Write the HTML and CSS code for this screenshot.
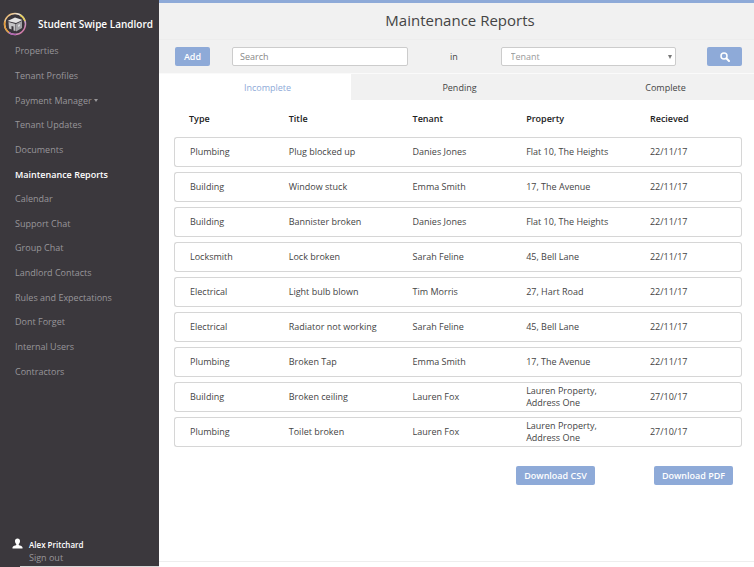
FILE: index.html
```html
<!DOCTYPE html>
<html lang="en">
<head>
  <meta charset="UTF-8">
  <meta name="viewport" content="width=device-width, initial-scale=1.0">
  <title>Maintenance Reports</title>
  <link rel="stylesheet" href="styles.css">
</head>
<body>

  <div class="page">

    <!-- Sidebar -->
    <aside class="sidebar">
      <a class="brand" href="#">
        <svg class="logo" viewBox="0 0 48 48" aria-hidden="true">
          <defs>
            <linearGradient id="ring" x1="0" y1="0" x2="1" y2="1">
              <stop offset="0" stop-color="#e8a33c"/>
              <stop offset="0.35" stop-color="#efe6dc"/>
              <stop offset="0.7" stop-color="#c9a3c9"/>
              <stop offset="1" stop-color="#d9568c"/>
            </linearGradient>
          </defs>
          <circle cx="24" cy="24" r="21" fill="#38343a" stroke="url(#ring)" stroke-width="3"/>
          <path d="M4 19a21 21 0 0 0 8 22" fill="none" stroke="#e59a35" stroke-width="3"/>
          <path d="M12 41a21 21 0 0 0 14 4" fill="none" stroke="#b35fb0" stroke-width="3"/>
          <path d="M34 6a21 21 0 0 1 10 12" fill="none" stroke="#e6d25a" stroke-width="3"/>
          <path d="M9 18l15-7 15 5-13 6z" fill="#e4e4e4"/>
          <path d="M11 20l14 4v14l-4-1v-8l-4-1v7l-5-2z" fill="#c4c4c6"/>
          <path d="M26 24l12-6v14l-12 7z" fill="#a2a2a6"/>
          <path d="M30 26l4-2v4l-4 2z" fill="#d9d9db"/>
        </svg>
        <span>Student Swipe Landlord</span>
      </a>

      <nav class="menu">
        <a href="#">Properties</a>
        <a href="#">Tenant Profiles</a>
        <a href="#">Payment Manager <span class="caret"></span></a>
        <a href="#">Tenant Updates</a>
        <a href="#">Documents</a>
        <a href="#" class="active">Maintenance Reports</a>
        <a href="#">Calendar</a>
        <a href="#">Support Chat</a>
        <a href="#">Group Chat</a>
        <a href="#">Landlord Contacts</a>
        <a href="#">Rules and Expectations</a>
        <a href="#">Dont Forget</a>
        <a href="#">Internal Users</a>
        <a href="#">Contractors</a>
      </nav>

      <div class="user">
        <svg class="user-icon" viewBox="0 0 22 22" aria-hidden="true">
          <path d="M11 1c-3.300 0-5 2.200-5 5.200 0 2.600 1 4.800 2.500 6v1.600c-2 1.200-7 1.700-7.500 4.700V21h20v-2.500c-.5-3-5.500-3.500-7.500-4.700v-1.600c1.500-1.200 2.500-3.400 2.500-6C16 3.200 14.300 1 11 1z" fill="#fff"/>
        </svg>
        <div>
          <div class="user-name">Alex Pritchard</div>
          <a href="#" class="sign-out">Sign out</a>
        </div>
      </div>
    </aside>

    <!-- Main content -->
    <main class="main">
      <h1>Maintenance Reports</h1>

      <form class="toolbar">
        <button type="button" class="btn btn-small">Add</button>
        <input type="text" class="field" placeholder="Search" aria-label="Search">
        <label class="in-label" for="search-in">in</label>
        <div class="select-wrap">
          <select id="search-in" class="field">
            <option>Tenant</option>
            <option>Property</option>
            <option>Type</option>
          </select>
        </div>
        <button type="button" class="btn btn-small btn-search" aria-label="Search reports">
          <svg viewBox="0 0 20 20" aria-hidden="true">
            <circle cx="8" cy="8" r="6" fill="none" stroke="#fff" stroke-width="3"/>
            <path d="M13 13l5 5" stroke="#fff" stroke-width="4" stroke-linecap="round"/>
          </svg>
        </button>
      </form>

      <div class="tabs">
        <button type="button" class="tab active">Incomplete</button>
        <button type="button" class="tab">Pending</button>
        <button type="button" class="tab">Complete</button>
      </div>

      <div class="content">
        <table class="reports">
          <colgroup>
            <col class="col-type">
            <col class="col-title">
            <col class="col-tenant">
            <col class="col-property">
            <col>
          </colgroup>
          <thead>
            <tr><th>Type</th><th>Title</th><th>Tenant</th><th>Property</th><th>Recieved</th></tr>
          </thead>
          <tbody>
            <tr><td>Plumbing</td><td>Plug blocked up</td><td>Danies Jones</td><td>Flat 10, The Heights</td><td>22/11/17</td></tr>
            <tr><td>Building</td><td>Window stuck</td><td>Emma Smith</td><td>17, The Avenue</td><td>22/11/17</td></tr>
            <tr><td>Building</td><td>Bannister broken</td><td>Danies Jones</td><td>Flat 10, The Heights</td><td>22/11/17</td></tr>
            <tr><td>Locksmith</td><td>Lock broken</td><td>Sarah Feline</td><td>45, Bell Lane</td><td>22/11/17</td></tr>
            <tr><td>Electrical</td><td>Light bulb blown</td><td>Tim Morris</td><td>27, Hart Road</td><td>22/11/17</td></tr>
            <tr><td>Electrical</td><td>Radiator not working</td><td>Sarah Feline</td><td>45, Bell Lane</td><td>22/11/17</td></tr>
            <tr><td>Plumbing</td><td>Broken Tap</td><td>Emma Smith</td><td>17, The Avenue</td><td>22/11/17</td></tr>
            <tr><td>Building</td><td>Broken ceiling</td><td>Lauren Fox</td><td>Lauren Property,<br>Address One</td><td>27/10/17</td></tr>
            <tr><td>Plumbing</td><td>Toilet broken</td><td>Lauren Fox</td><td>Lauren Property,<br>Address One</td><td>27/10/17</td></tr>
          </tbody>
        </table>

        <div class="downloads">
          <button type="button" class="btn btn-download">Download CSV</button>
          <button type="button" class="btn btn-download">Download PDF</button>
        </div>
      </div>

      <footer class="footer"></footer>
    </main>

  </div>

</body>
</html>
```
FILE: styles.css
```css
* {
  box-sizing: border-box;
}

body {
  margin: 0;
  font-family: "Open Sans", Arial, sans-serif;
  font-size: 9px;
  line-height: 12px;
  color: #444;
  background-color: #fff;
}

a {
  text-decoration: none;
}

button,
input,
select {
  font-family: inherit;
  font-size: inherit;
}

.page {
  display: flex;
  min-height: 100vh;
}

/* Sidebar */
.sidebar {
  display: flex;
  flex-direction: column;
  flex: 0 0 159px;
  background-color: #3b383d;
}

.brand {
  display: flex;
  align-items: center;
  gap: 11px;
  padding: 12px 0 3px 3px;
  color: #fff;
  font-size: 10px;
  font-weight: 600;
  white-space: nowrap;
}

.logo {
  width: 24px;
  height: 24px;
}

.menu {
  display: flex;
  flex-direction: column;
  min-height: 345px;
}

.menu a {
  display: flex;
  flex: 1;
  align-items: center;
  padding-left: 15px;
  color: #98969a;
}

.menu a.active {
  color: #fff;
  font-weight: 600;
}

.caret {
  margin-left: 2px;
  border-top: 3px solid #98969a;
  border-left: 2px solid transparent;
  border-right: 2px solid transparent;
}

.user {
  display: flex;
  flex-wrap: wrap;
  gap: 2px 6px;
  margin-top: auto;
  padding-left: 12px;
}

.user::after {
  content: "";
  flex: 0 0 calc(100% - 8px);
  height: 1px;
  margin-left: 8px;
  background-color: #d8d8d8;
}

.user-icon {
  width: 11px;
  height: 11px;
}

.user-name {
  color: #fff;
  font-size: 8px;
  line-height: 13px;
  font-weight: 600;
}

.sign-out {
  display: block;
  color: #98969a;
  line-height: 13px;
}

/* Header */
.main {
  display: flex;
  flex: 1;
  flex-direction: column;
  min-width: 0;
  border-top: 3px solid #8eaad8;
}

h1 {
  margin: 0;
  padding: 7px 0 9px 7px;
  background-color: #f1f1f1;
  border-bottom: 1px solid #ededed;
  color: #444;
  font-size: 15px;
  line-height: 20px;
  font-weight: normal;
  text-align: center;
}

.toolbar {
  display: grid;
  grid-template-columns: 57px 1fr 93px 1fr 66px;
  align-items: center;
  padding: 7px 12px 7px 16px;
  background-color: #f1f1f1;
  border-bottom: 1px solid #fafafa;
}

.btn {
  height: 19px;
  padding: 0;
  background-color: #8eaad8;
  border: none;
  border-radius: 2px;
  color: #fff;
  font-weight: 600;
  cursor: pointer;
}

.btn-small {
  width: 35px;
}

.btn-search {
  display: flex;
  align-items: center;
  justify-content: center;
  justify-self: end;
}

.btn-search svg {
  width: 10px;
  height: 10px;
}

.field {
  width: 100%;
  height: 19px;
  padding: 0 7px;
  background-color: #fff;
  border: 1px solid #ccc;
  border-radius: 2px;
  color: #999;
}

.field::placeholder {
  color: #888;
}

.in-label {
  text-align: center;
}

.select-wrap {
  position: relative;
}

.select-wrap select {
  display: block;
  padding-left: 9px;
  appearance: none;
}

.select-wrap::after {
  content: "";
  position: absolute;
  top: 8px;
  right: 4px;
  border-top: 4px solid #777;
  border-left: 2px solid transparent;
  border-right: 2px solid transparent;
}

/* Tabs */
.tabs {
  display: grid;
  grid-template-columns: 192fr 217fr 186fr;
  background-color: #f1f1f1;
}

.tab {
  height: 26px;
  padding: 0;
  background: none;
  border: none;
  color: #444;
  cursor: pointer;
}

.tab:first-child {
  padding-left: 25px;
}

.tab:last-child {
  padding-left: 9px;
}

.tab.active {
  background-color: #fff;
  color: #8eaad8;
}

/* Reports table */
.content {
  padding: 8px 12px 0 15px;
}

.reports {
  width: 100%;
  table-layout: fixed;
  border-collapse: separate;
  border-spacing: 0 5px;
}

.col-type {
  width: 20.2%;
}

.col-title {
  width: 21.8%;
}

.col-tenant {
  width: 20%;
}

.col-property {
  width: 21.8%;
}

.reports th {
  padding: 0 0 7px;
  color: #222;
  font-weight: 600;
  text-align: left;
}

.reports td {
  height: 30px;
  padding: 0;
  border: solid #d6d6d6;
  border-width: 1px 0;
}

.reports th:first-child,
.reports td:first-child {
  padding-left: 15px;
}

.reports td:first-child {
  border-left-width: 1px;
  border-radius: 3px 0 0 3px;
}

.reports td:last-child {
  border-right-width: 1px;
  border-radius: 0 3px 3px 0;
}

.downloads {
  display: flex;
  justify-content: flex-end;
  gap: 59px;
  padding: 14px 9px 20px 0;
}

.btn-download {
  width: 79px;
}

.footer {
  height: 6px;
  margin-top: auto;
  border-top: 1px solid #eee;
}
```
